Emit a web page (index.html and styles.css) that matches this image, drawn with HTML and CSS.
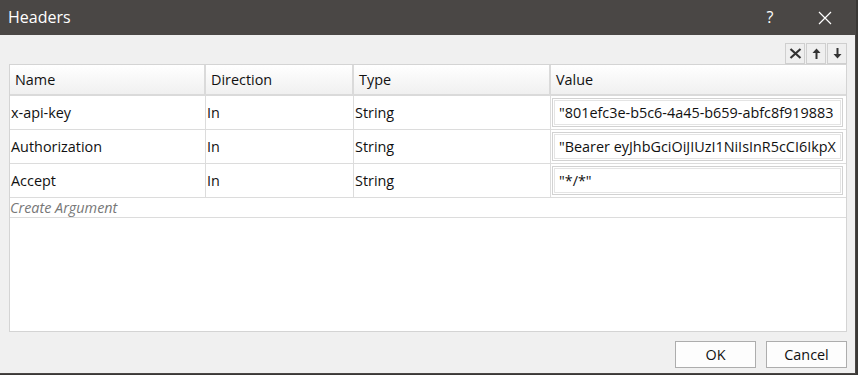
FILE: index.html
```html
<!DOCTYPE html>
<html>
<head>
<meta charset="utf-8">
<link rel="stylesheet" href="styles.css">
</head>
<body>
<div class="dialog">
  <div class="titlebar">
    <span class="title">Headers</span>
    <span class="help">?</span>
    <span class="close">
      <svg width="14" height="14" viewBox="0 0 14 14"><path d="M1 1L13 13M13 1L1 13" stroke="#fff" stroke-width="1.2" fill="none"/></svg>
    </span>
  </div>
  <div class="content">
    <div class="toolbar">
      <span class="tbtn">
        <svg width="13" height="11" viewBox="0 0 13 11"><path d="M1.5 1L11.5 10M11.5 1L1.5 10" stroke="#333" stroke-width="2.2" fill="none"/></svg>
      </span>
      <span class="tbtn">
        <svg width="9" height="11" viewBox="0 0 9 11"><path d="M4.5 11V3" stroke="#333" stroke-width="2"/><path d="M0.5 5L4.5 0.5L8.5 5Z" fill="#333"/></svg>
      </span>
      <span class="tbtn">
        <svg width="9" height="11" viewBox="0 0 9 11"><path d="M4.5 0V8" stroke="#333" stroke-width="2"/><path d="M0.5 6L4.5 10.5L8.5 6Z" fill="#333"/></svg>
      </span>
    </div>
    <div class="grid">
      <div class="row head">
        <div class="cell">Name</div>
        <div class="cell">Direction</div>
        <div class="cell">Type</div>
        <div class="cell">Value</div>
      </div>
      <div class="row">
        <div class="cell">x-api-key</div>
        <div class="cell">In</div>
        <div class="cell">String</div>
        <div class="cell val"><div class="input">"801efc3e-b5c6-4a45-b659-abfc8f919883</div></div>
      </div>
      <div class="row">
        <div class="cell">Authorization</div>
        <div class="cell">In</div>
        <div class="cell">String</div>
        <div class="cell val"><div class="input">"Bearer eyJhbGciOiJIUzI1NiIsInR5cCI6IkpX</div></div>
      </div>
      <div class="row">
        <div class="cell">Accept</div>
        <div class="cell">In</div>
        <div class="cell">String</div>
        <div class="cell val"><div class="input">"*/*"</div></div>
      </div>
      <div class="create">Create Argument</div>
    </div>
    <div class="footer">
      <button class="btn">OK</button>
      <button class="btn">Cancel</button>
    </div>
  </div>
</div>
</body>
</html>
```
FILE: styles.css
```css
html, body {
  margin: 0;
  padding: 0;
  background: #3a3836;
  width: 858px;
  height: 375px;
  overflow: hidden;
  font-family: "Open Sans", "Noto Sans", sans-serif;
}
.dialog {
  width: 855px;
  height: 373px;
  border-right: 1px solid #4a4745;
  border-bottom: 1px solid #4a4745;
  background: #f0f0f0;
  display: flex;
  flex-direction: column;
}
.titlebar {
  height: 35px;
  background: #4a4745;
  color: #fff;
  display: flex;
  align-items: center;
  flex-shrink: 0;
}
.title {
  font-size: 16px;
  padding-left: 8px;
  flex: 1;
  padding-bottom: 2px;
}
.help {
  font-size: 16px;
  width: 20px;
  margin-right: 38px;
  text-align: center;
  padding-bottom: 2px;
}
.close {
  width: 14px;
  height: 14px;
  margin-right: 23px;
  display: flex;
}
.content {
  flex: 1;
  display: flex;
  flex-direction: column;
  padding: 8px 8px 0 9px;
}
.toolbar {
  display: flex;
  justify-content: flex-end;
  height: 21px;
  gap: 1px;
  padding-right: 0;
}
.tbtn {
  width: 18px;
  height: 19px;
  border: 1px solid #cfcfcf;
  background: #efefef;
  display: flex;
  align-items: center;
  justify-content: center;
}
.grid {
  height: 266px;
  border: 1px solid #d4d4d4;
  background: #fff;
  font-size: 14.4px;
  color: #111;
}
.row {
  display: grid;
  grid-template-columns: 196px 148px 197px 1fr;
  height: 33px;
  border-bottom: 1px solid #dcdcdc;
}
.row.head {
  height: 29px;
  background: linear-gradient(#ffffff, #f0f0f0);
  border-bottom: 2px solid #dadada;
}
.cell {
  display: flex;
  align-items: center;
  padding-left: 1px;
  border-right: 1px solid #dcdcdc;
  white-space: nowrap;
  overflow: hidden;
}
.head .cell {
  padding-left: 5px;
  border-right: 2px solid #dadada;
}
.head .cell:last-child, .cell:last-child {
  border-right: none;
}
.cell.val {
  padding: 1px 3px 1px 1px;
}
.input {
  width: 100%;
  height: 29px;
  box-sizing: border-box;
  border: 1px solid #d2d2d2;
  box-shadow: inset 0 0 0 1px #fff, inset 0 0 0 2px #e4e4e4;
  display: flex;
  align-items: center;
  padding-left: 6px;
  overflow: hidden;
  white-space: nowrap;
}
.create {
  height: 19px;
  line-height: 19px;
  border-bottom: 1px solid #dcdcdc;
  padding-left: 0;
  font-style: italic;
  color: #777;
}
.footer {
  display: flex;
  justify-content: flex-end;
  gap: 10px;
  padding-top: 9px;
}
.btn {
  width: 81px;
  height: 27px;
  border: 1px solid #adadad;
  background: #fdfdfd;
  font-family: inherit;
  font-size: 14.4px;
  color: #111;
  padding: 0;
}
```
